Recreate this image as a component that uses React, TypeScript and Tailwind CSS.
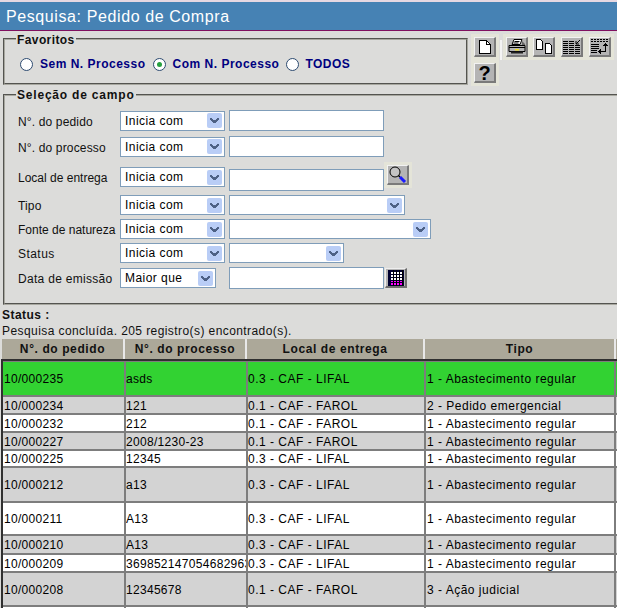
import React from 'react';

const FONT = "font-['Liberation_Sans',Arial,sans-serif]";

type Row = { pedido: string; processo: string; local: string; tipo: string; h: string; bg: string };

const rows: Row[] = [
  { pedido: '10/000235', processo: 'asds', local: '0.3 - CAF - LIFAL', tipo: '1 - Abastecimento regular', h: 'h-[33px]', bg: 'bg-[#32d232]' },
  { pedido: '10/000234', processo: '121', local: '0.1 - CAF - FAROL', tipo: '2 - Pedido emergencial', h: 'h-[16px]', bg: 'bg-[#d3d3d3]' },
  { pedido: '10/000232', processo: '212', local: '0.1 - CAF - FAROL', tipo: '1 - Abastecimento regular', h: 'h-[16px]', bg: 'bg-white' },
  { pedido: '10/000227', processo: '2008/1230-23', local: '0.1 - CAF - FAROL', tipo: '1 - Abastecimento regular', h: 'h-[16px]', bg: 'bg-[#d3d3d3]' },
  { pedido: '10/000225', processo: '12345', local: '0.3 - CAF - LIFAL', tipo: '1 - Abastecimento regular', h: 'h-[15px]', bg: 'bg-white' },
  { pedido: '10/000212', processo: 'a13', local: '0.3 - CAF - LIFAL', tipo: '1 - Abastecimento regular', h: 'h-[33px]', bg: 'bg-[#d3d3d3]' },
  { pedido: '10/000211', processo: 'A13', local: '0.3 - CAF - LIFAL', tipo: '1 - Abastecimento regular', h: 'h-[31px]', bg: 'bg-white' },
  { pedido: '10/000210', processo: 'A13', local: '0.3 - CAF - LIFAL', tipo: '1 - Abastecimento regular', h: 'h-[17px]', bg: 'bg-[#d3d3d3]' },
  { pedido: '10/000209', processo: '36985214705468296369', local: '0.3 - CAF - LIFAL', tipo: '1 - Abastecimento regular', h: 'h-[16px]', bg: 'bg-white' },
  { pedido: '10/000208', processo: '12345678', local: '0.1 - CAF - FAROL', tipo: '3 - Ação judicial', h: 'h-[32px]', bg: 'bg-[#d3d3d3]' },
  { pedido: '', processo: '', local: '', tipo: '', h: 'h-[16px]', bg: 'bg-white' },
];

const Chevron = () => (
  <span className="flex h-[15px] w-[15px] shrink-0 items-center justify-center rounded-[2px] bg-[#b9cdf6]">
    <svg width="9" height="7" viewBox="0 0 9 7" shapeRendering="crispEdges">
      <path d="M0 1h2v1h1v1h3V2h1V1h2v2H8v1H7v1H6v1H3V5H2V4H1V3H0z" fill="#4d6185" />
    </svg>
  </span>
);

const FakeSelect = ({ value, width }: { value?: string; width: string }) => (
  <div className={`flex h-5 items-center justify-between border border-[#7f9db9] bg-white pl-1 pr-[2px] ${width}`}>
    <span className="text-[12px] tracking-[0.45px] text-black">{value}</span>
    <Chevron />
  </div>
);

const TextBox = ({ h = 'h-[21px]' }: { h?: string }) => (
  <div className={`w-[155px] border border-[#7f9db9] bg-white ${h}`} />
);

const Label = ({ children, tracking = 'tracking-[0.15px]' }: { children: React.ReactNode; tracking?: string }) => (
  <span className={`w-[102px] shrink-0 whitespace-nowrap pt-[2px] text-[12px] text-[#111] ${tracking}`}>{children}</span>
);

const Radio = ({ checked }: { checked?: boolean }) => (
  <span className="flex h-[13px] w-[13px] items-center justify-center rounded-full border border-[#2c4a70] bg-white">
    {checked && <span className="h-[5px] w-[5px] rounded-full bg-[#27a040]" />}
  </span>
);

const ToolButton = ({ children, label }: { children: React.ReactNode; label: string }) => (
  <button
    aria-label={label}
    className="flex h-5 w-[22px] items-center justify-center border-t border-l border-r-2 border-b-2 border-t-[#f2f2f2] border-l-[#f2f2f2] border-r-[#7a7a7a] border-b-[#7a7a7a] bg-[#b4b4b4] outline outline-[3px] outline-[#e4e4d8]"
  >
    {children}
  </button>
);

const NewIcon = () => (
  <svg className="shrink-0" width="14" height="16" viewBox="0 0 14 16" shapeRendering="crispEdges">
    <path d="M1.500 1.500h7l4 4v9h-11z" fill="#fff" stroke="#000" />
    <path d="M8.500 1.500v4h4" fill="none" stroke="#000" />
  </svg>
);

const PrintIcon = () => (
  <svg className="shrink-0" width="18" height="15" viewBox="0 0 18 15">
    <path d="M6 .5h8l-2 5H4z" fill="#fff" stroke="#000" />
    <path d="M6.500 2.500h5M5.500 4h5" stroke="#000" />
    <path d="M14 2l3 3v3h-3z" fill="#666" />
    <path d="M1 6.500h16v6H1z" fill="#b4b4b4" stroke="#000" />
    <path d="M1 8.500h16" stroke="#000" />
    <path d="M3 12.500h12v2H3z" fill="#222" />
    <path d="M7 10h4v1.500H7z" fill="#f0e020" />
  </svg>
);

const CopyIcon = () => (
  <svg className="shrink-0" width="18" height="15" viewBox="0 0 18 15" shapeRendering="crispEdges">
    <path d="M1.500 .5h4l2 2v8h-6z" fill="#fff" stroke="#000" />
    <path d="M10.500 4.500h4l2 2v8h-6z" fill="#fff" stroke="#000" />
  </svg>
);

const GridInIcon = () => (
  <svg className="shrink-0" width="18" height="16" viewBox="0 0 18 16" shapeRendering="crispEdges">
    <path d="M0 2.500h12M0 4.500h12M0 6.500h18M0 8.500h18M0 10.500h18M0 12.500h18M0 14.500h18" stroke="#000" strokeDasharray="5 1" />
    <path d="M13 5l4-4M13 2v3h3" fill="none" stroke="#000" shapeRendering="auto" />
  </svg>
);

const GridSortIcon = () => (
  <svg className="shrink-0" width="18" height="16" viewBox="0 0 18 16" shapeRendering="crispEdges">
    <path d="M0 .5h18M0 2.500h18" stroke="#000" strokeDasharray="2 1" />
    <path d="M0 5.500h8M0 7.500h8M0 9.500h8M0 11.500h6M0 13.500h6" stroke="#000" />
    <path d="M8 12h6V6h1v7H8z" fill="#000" />
    <path d="M12 7h5v-1h-1V5h-1V4h-1v1h-1v1h-1zM10 10v5H9v-1H8v-1H7v-1h1v-1h1v-1z" fill="#000" />
  </svg>
);

const SearchIcon = () => (
  <svg className="shrink-0" width="19" height="17" viewBox="0 0 19 17">
    <circle cx="7" cy="6" r="5" fill="#c4c4c4" stroke="#000" />
    <path d="M10.500 9.500l1.500 1.500" stroke="#000" strokeWidth="1.500" />
    <path d="M12 11l5 5" stroke="#1a1aff" strokeWidth="3" />
  </svg>
);

const CalendarIcon = () => (
  <svg className="shrink-0" width="16" height="16" viewBox="0 0 16 16" shapeRendering="crispEdges">
    <rect width="16" height="16" fill="#000030" />
    <path d="M3 2h12v2H3zM3 5h12v2H3zM3 8h12v2H3z" fill="#fff" />
    <path d="M3 11h12v1H3zM3 13h12v2H3z" fill="#ff00ff" />
    <path d="M5.500 0v16M8.500 0v16M11.500 0v16M14.500 0v16" stroke="#000" />
  </svg>
);

const HeaderCell = ({ children, w }: { children?: React.ReactNode; w: string }) => (
  <div className={`flex h-full shrink-0 items-center justify-center border-r-2 border-[#e8e8e8] bg-[#aca899] text-[12px] font-bold tracking-[0.6px] text-[#111] ${w}`}>
    {children}
  </div>
);

const Cell = ({ children, w, bg, tracking = 'tracking-[0.3px]' }: { children?: React.ReactNode; w: string; bg: string; tracking?: string }) => (
  <div className={`flex h-full shrink-0 items-center overflow-hidden whitespace-nowrap pt-[1px] text-[12px] text-black ${tracking} ${w} ${bg}`}>
    {children}
  </div>
);

export default function App() {
  return (
    <div className={`h-[608px] w-[617px] overflow-hidden bg-[#dcdcda] ${FONT}`}>
      {/* Title bar */}
      <div className="flex h-[31px] items-center border-t-2 border-b border-t-[#e6d8e2] border-b-[#80105f] bg-[#4682b4] pl-[6px] pt-[1px] text-[16px] tracking-[0.6px] text-white">
        Pesquisa: Pedido de Compra
      </div>

      {/* Favoritos + toolbar */}
      <div className="flex h-[54px]">
        <fieldset className="ml-[3px] mt-[1px] h-[53px] w-[465px] border-2 border-[#a8a8a0] [border-style:groove]">
          <legend className="ml-[11px] translate-y-[1px] px-[1px] text-[12px] font-bold leading-[14px] tracking-[0.4px] text-[#111]">Favoritos</legend>
          <div className="ml-[15px] mt-[9px] flex items-center text-[12px] font-bold tracking-[0.5px] text-[#000080]">
            <Radio />
            <span className="ml-[7px]">Sem N. Processo</span>
            <span className="ml-[7px]"><Radio checked /></span>
            <span className="ml-[7px]">Com N. Processo</span>
            <span className="ml-[7px]"><Radio /></span>
            <span className="ml-[6px]">TODOS</span>
          </div>
        </fieldset>
        <div className="ml-[6px] mt-[6px] flex flex-col gap-[6px]">
          <div className="flex items-center">
            <ToolButton label="Novo"><NewIcon /></ToolButton>
            <span className="ml-[4px] mr-[4px] h-5 w-[2px] translate-y-[3px] bg-[#f4f4f4]" />
            <div className="flex gap-[5px]">
              <ToolButton label="Imprimir"><PrintIcon /></ToolButton>
              <span className="w-[23px]"><ToolButton label="Copiar"><CopyIcon /></ToolButton></span>
              <span className="w-[23px]"><ToolButton label="Colunas"><GridInIcon /></ToolButton></span>
              <ToolButton label="Ordenar"><GridSortIcon /></ToolButton>
            </div>
          </div>
          <ToolButton label="Ajuda"><span className="text-[20px] leading-none font-bold text-black">?</span></ToolButton>
        </div>
      </div>

      {/* Seleção de campo */}
      <fieldset className="ml-[3px] mt-[3px] h-[217px] w-[620px] border-2 border-[#a8a8a0] [border-style:groove]">
        <legend className="ml-[11px] px-[1px] text-[12px] font-bold leading-[14px] tracking-[0.8px] text-[#111]">Seleção de campo</legend>
        <div className="ml-[13px] mt-[8px] flex flex-col">
          <div className="flex h-[21px] items-center">
            <Label>N°. do pedido</Label>
            <FakeSelect value="Inicia com" width="w-[105px]" />
            <span className="ml-[4px]"><TextBox /></span>
          </div>
          <div className="mt-[5px] flex h-[21px] items-center">
            <Label>N°. do processo</Label>
            <FakeSelect value="Inicia com" width="w-[105px]" />
            <span className="ml-[4px]"><TextBox /></span>
          </div>
          <div className="mt-[10px] flex h-[26px] items-start">
            <div className="flex h-5 w-[102px] items-center"><Label tracking="tracking-[0px]">Local de entrega</Label></div>
            <FakeSelect value="Inicia com" width="w-[105px]" />
            <span className="ml-[4px] mt-[2px]"><TextBox h="h-[22px]" /></span>
            <span className="ml-[3px] -mt-[2px]"><ToolButton label="Pesquisar"><SearchIcon /></ToolButton></span>
          </div>
          <div className="mt-[2px] flex h-5 items-center">
            <Label>Tipo</Label>
            <FakeSelect value="Inicia com" width="w-[105px]" />
            <span className="ml-[4px]"><FakeSelect width="w-[176px]" /></span>
          </div>
          <div className="mt-[4px] flex h-5 items-center">
            <Label tracking="tracking-[0px]">Fonte de natureza</Label>
            <FakeSelect value="Inicia com" width="w-[105px]" />
            <span className="ml-[4px]"><FakeSelect width="w-[202px]" /></span>
          </div>
          <div className="mt-[4px] flex h-5 items-center">
            <Label tracking="tracking-[0.45px]">Status</Label>
            <FakeSelect value="Inicia com" width="w-[105px]" />
            <span className="ml-[4px]"><FakeSelect width="w-[115px]" /></span>
          </div>
          <div className="mt-[4px] flex h-[22px] items-center">
            <Label tracking="tracking-[0.3px]">Data de emissão</Label>
            <FakeSelect value="Maior que" width="w-[96px]" />
            <span className="ml-[13px]"><TextBox h="h-[22px]" /></span>
            <button aria-label="Calendário" className="ml-[1px] flex h-5 w-[22px] items-center justify-center border-t border-l border-r-2 border-b-2 border-t-[#efefef] border-l-[#efefef] border-r-[#6e6e6e] border-b-[#6e6e6e] bg-[#b4b4b4]">
              <CalendarIcon />
            </button>
          </div>
        </div>
      </fieldset>

      {/* Status */}
      <div className="mt-[3px] pl-[2px] text-[12px] font-bold leading-[14px] tracking-[0.45px] text-[#111]">Status :</div>
      <div className="mt-[2px] pl-[2px] text-[12px] leading-[14px] tracking-[0.42px] text-[#111]">Pesquisa concluída. 205 registro(s) encontrado(s).</div>

      {/* Grid header */}
      <div className="mt-[1px] ml-[2px] flex h-5 w-[640px]">
        <HeaderCell w="w-[123px]">N°. do pedido</HeaderCell>
        <HeaderCell w="w-[122px]">N°. do processo</HeaderCell>
        <HeaderCell w="w-[178px]">Local de entrega</HeaderCell>
        <HeaderCell w="w-[191px]">Tipo</HeaderCell>
        <HeaderCell w="w-[20px]" />
      </div>

      {/* Grid body */}
      <div className="ml-[1px] flex w-[640px] flex-col gap-[2px] border-t-2 border-l-2 border-[#303030] bg-[#7d7d7d] pt-[1px]">
        {rows.map((r) => (
          <div key={r.pedido} className={`flex gap-[2px] ${r.h}`}>
            <Cell w="w-[121px]" bg={r.bg}><span className="pl-[1px]">{r.pedido}</span></Cell>
            <Cell w="w-[120px]" bg={r.bg}>{r.processo}</Cell>
            <Cell w="w-[176px]" bg={r.bg} tracking="tracking-[0.5px]">{r.local}</Cell>
            <Cell w="w-[188px]" bg={r.bg} tracking="tracking-[0.5px]"><span className="pl-[1px]">{r.tipo}</span></Cell>
            <Cell w="w-[30px]" bg={r.bg} />
          </div>
        ))}
      </div>
    </div>
  );
}
